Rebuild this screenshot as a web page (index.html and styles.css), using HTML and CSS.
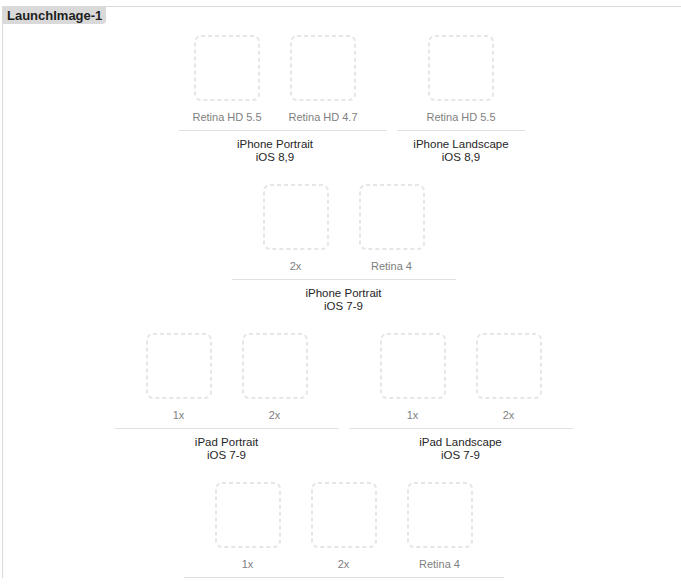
FILE: index.html
```html
<!DOCTYPE html>
<html>
<head>
<meta charset="utf-8">
<link rel="stylesheet" href="styles.css">
</head>
<body>
<div class="catalog">
  <div class="tag">LaunchImage-1</div>
  <div class="rows">
    <div class="row row-first">
      <div class="group group-wide">
        <div class="items">
          <div class="item"><svg class="slot" width="66" height="66" viewBox="0 0 66 66"><rect x="1" y="1" width="64" height="64" rx="6" /></svg><div class="label">Retina HD 5.5</div></div>
          <div class="item"><svg class="slot" width="66" height="66" viewBox="0 0 66 66"><rect x="1" y="1" width="64" height="64" rx="6" /></svg><div class="label">Retina HD 4.7</div></div>
        </div>
        <div class="title">iPhone Portrait<br>iOS 8,9</div>
      </div>
      <div class="group">
        <div class="items">
          <div class="item"><svg class="slot" width="66" height="66" viewBox="0 0 66 66"><rect x="1" y="1" width="64" height="64" rx="6" /></svg><div class="label">Retina HD 5.5</div></div>
        </div>
        <div class="title">iPhone Landscape<br>iOS 8,9</div>
      </div>
    </div>

    <div class="row">
      <div class="group">
        <div class="items">
          <div class="item"><svg class="slot" width="66" height="66" viewBox="0 0 66 66"><rect x="1" y="1" width="64" height="64" rx="6" /></svg><div class="label">2x</div></div>
          <div class="item"><svg class="slot" width="66" height="66" viewBox="0 0 66 66"><rect x="1" y="1" width="64" height="64" rx="6" /></svg><div class="label">Retina 4</div></div>
        </div>
        <div class="title">iPhone Portrait<br>iOS 7-9</div>
      </div>
    </div>

    <div class="row">
      <div class="group">
        <div class="items">
          <div class="item"><svg class="slot" width="66" height="66" viewBox="0 0 66 66"><rect x="1" y="1" width="64" height="64" rx="6" /></svg><div class="label">1x</div></div>
          <div class="item"><svg class="slot" width="66" height="66" viewBox="0 0 66 66"><rect x="1" y="1" width="64" height="64" rx="6" /></svg><div class="label">2x</div></div>
        </div>
        <div class="title">iPad Portrait<br>iOS 7-9</div>
      </div>
      <div class="group">
        <div class="items">
          <div class="item"><svg class="slot" width="66" height="66" viewBox="0 0 66 66"><rect x="1" y="1" width="64" height="64" rx="6" /></svg><div class="label">1x</div></div>
          <div class="item"><svg class="slot" width="66" height="66" viewBox="0 0 66 66"><rect x="1" y="1" width="64" height="64" rx="6" /></svg><div class="label">2x</div></div>
        </div>
        <div class="title">iPad Landscape<br>iOS 7-9</div>
      </div>
    </div>

    <div class="row">
      <div class="group">
        <div class="items">
          <div class="item"><svg class="slot" width="66" height="66" viewBox="0 0 66 66"><rect x="1" y="1" width="64" height="64" rx="6" /></svg><div class="label">1x</div></div>
          <div class="item"><svg class="slot" width="66" height="66" viewBox="0 0 66 66"><rect x="1" y="1" width="64" height="64" rx="6" /></svg><div class="label">2x</div></div>
          <div class="item"><svg class="slot" width="66" height="66" viewBox="0 0 66 66"><rect x="1" y="1" width="64" height="64" rx="6" /></svg><div class="label">Retina 4</div></div>
        </div>
        <div class="title title-empty"></div>
      </div>
    </div>
  </div>
</div>
</body>
</html>
```

FILE: styles.css
```css
html, body {
  margin: 0;
  padding: 0;
  background: #ffffff;
  overflow: hidden;
  height: 100%;
}

body {
  font-family: "Liberation Sans", Arial, sans-serif;
  color: #262626;
}

.catalog {
  margin: 6px 0 0 2px;
  height: 572px;
  box-sizing: border-box;
  border-top: 1px solid #dadada;
  border-left: 1px solid #dadada;
  display: flex;
  flex-direction: column;
}

.tag {
  align-self: flex-start;
  background: #d9d9d9;
  color: #1e1e1e;
  font-weight: bold;
  font-size: 13px;
  line-height: 17px;
  height: 17px;
  padding: 0 4px;
  border-bottom-right-radius: 4px;
  white-space: nowrap;
}

.rows {
  display: flex;
  flex-direction: column;
  gap: 20px;
  padding: 11px 0 0 3px;
}

.row {
  display: flex;
  justify-content: center;
  gap: 10px;
}

.row-first {
  margin-left: 17px;
}

.group {
  display: flex;
  flex-direction: column;
}

.items {
  display: flex;
  padding: 0 16px 6px 16px;
}

.group-wide .items {
  padding-left: 0;
}

.item {
  width: 96px;
  display: flex;
  flex-direction: column;
  align-items: center;
}

.slot {
  display: block;
}

.slot rect {
  fill: none;
  stroke: #e6e6e6;
  stroke-width: 2;
  stroke-dasharray: 4 3;
}

.label {
  margin-top: 10px;
  font-size: 11px;
  line-height: 13px;
  color: #808080;
  white-space: nowrap;
}

.title {
  border-top: 1px solid #e0e0e0;
  padding-top: 7px;
  font-size: 11.5px;
  line-height: 13px;
  text-align: center;
  color: #262626;
  white-space: nowrap;
}

.title-empty {
  height: 26px;
}

.group-wide .title {
  padding-right: 16px;
}
```
